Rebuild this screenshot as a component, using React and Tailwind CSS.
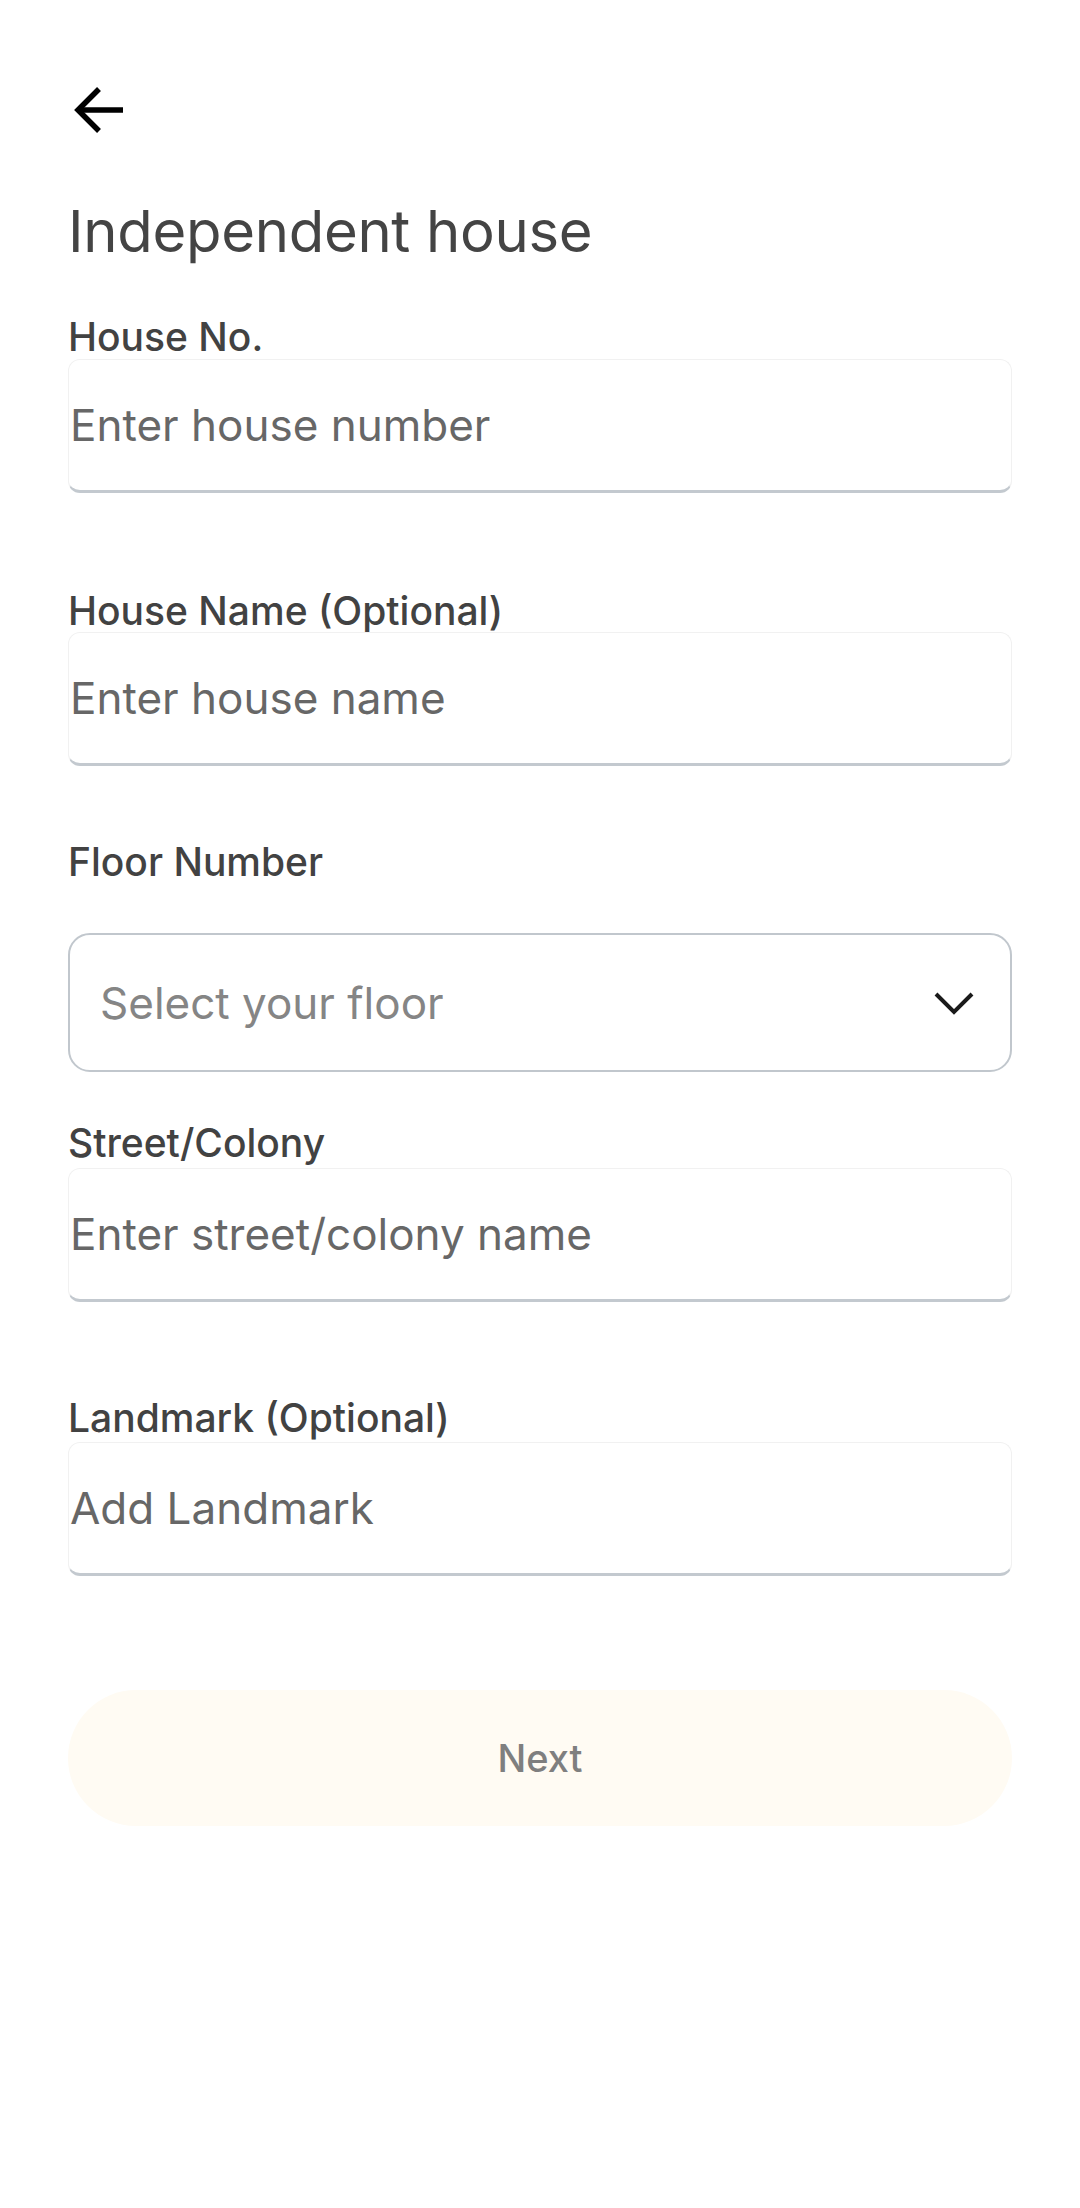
import React from "react";

function TextField({ label, placeholder, inputClass }) {
  return (
    <div className="flex flex-col">
      <label className="text-[39px] leading-[40px] font-medium text-[#424242]">{label}</label>
      <div className={"h-[134px] rounded-[12px] border border-[#f1f1f1] border-b-[3px] border-b-[#c3c9cf] bg-white flex items-center " + inputClass}>
        <input
          className="w-full bg-transparent outline-none text-[44px] pl-[1px] text-[#555] placeholder:text-[#676767]"
          placeholder={placeholder}
        />
      </div>
    </div>
  );
}

export default function App() {
  return (
    <div
      className="min-h-[2208px] w-[1080px] bg-white"
      style={{ fontFamily: "Inter, 'Noto Sans', sans-serif" }}
    >
      <div className="px-[68px] pt-[82px]">
        <button className="ml-[4px] flex h-[56px] w-[56px] items-center justify-center">
          <svg width="56" height="56" viewBox="0 0 56 56" fill="none">
            <path d="M5 28 H51" stroke="#000" strokeWidth="5.5" />
            <path d="M27 7 L6 28 L27 49" stroke="#000" strokeWidth="5.5" strokeLinejoin="miter" />
          </svg>
        </button>

        <h1 className="mt-[58px] text-[58px] leading-[70px] font-normal text-[#444] tracking-[-0.3px]">
          Independent house
        </h1>

        <div className="mt-[51px]">
          <TextField label="House No." placeholder="Enter house number" inputClass="mt-[2px]" />
        </div>

        <div className="mt-[98px]">
          <TextField label="House Name (Optional)" placeholder="Enter house name" inputClass="mt-[1px]" />
        </div>

        <div className="mt-[76px] flex flex-col">
          <label className="text-[39px] leading-[40px] font-medium text-[#424242]">Floor Number</label>
          <div className="mt-[51px] flex h-[139px] items-center justify-between rounded-[22px] border-[2.5px] border-[#c1c7cd] pl-[30px] pr-[36px]">
            <span className="text-[44px] text-[#858585]">Select your floor</span>
            <svg width="40" height="24" viewBox="0 0 40 24" fill="none">
              <path d="M2 3 L20 21 L38 3" stroke="#1a1a1a" strokeWidth="4" />
            </svg>
          </div>
        </div>

        <div className="mt-[51px]">
          <TextField label="Street/Colony" placeholder="Enter street/colony name" inputClass="mt-[5px]" />
        </div>

        <div className="mt-[96px]">
          <TextField label="Landmark (Optional)" placeholder="Add Landmark" inputClass="mt-[4px]" />
        </div>

        <button className="mt-[114px] flex h-[136px] w-full items-center justify-center rounded-full bg-[#fffbf3]">
          <span className="text-[38px] font-medium text-[#7f7f7f]">Next</span>
        </button>
      </div>
    </div>
  );
}
